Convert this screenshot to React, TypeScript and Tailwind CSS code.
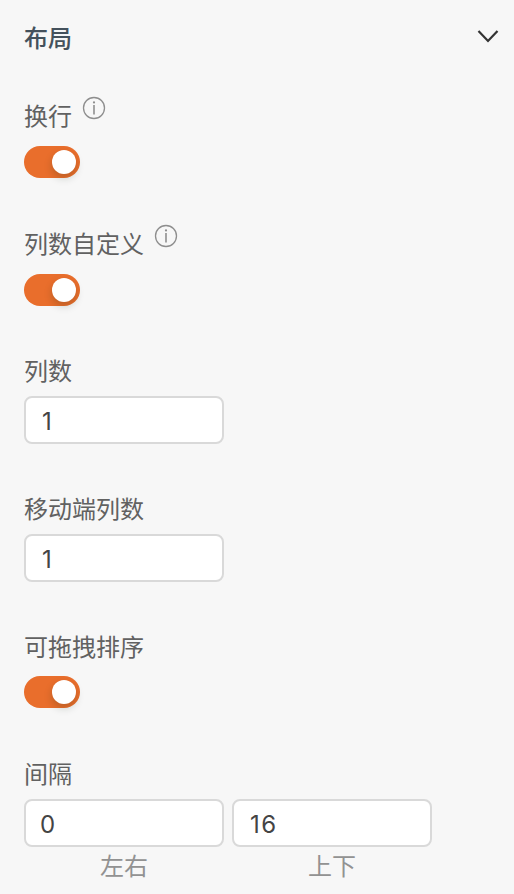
import React from "react";

const font = "font-['Inter','Noto_Sans_CJK_SC',sans-serif]";

function Info() {
  return (
    <svg width="24" height="24" viewBox="0 0 24 24" fill="none" stroke="#8e8e8e" strokeWidth="1.3" className="shrink-0">
      <circle cx="12" cy="12" r="10.5" />
      <path d="M12 9v9.5" strokeWidth="1.6" />
      <circle cx="12" cy="6.4" r="1.1" fill="#8e8e8e" stroke="none" />
    </svg>
  );
}

function Label({ text, info }: { text: string; info?: boolean }) {
  return (
    <div className="flex h-8 items-center text-[24px] leading-8 text-[#616161]">
      <span className={`whitespace-nowrap font-normal ${info ? "pt-[2px]" : "pt-px"}`}>{text}</span>
      {info && <span className="mb-4 ml-2.5"><Info /></span>}
    </div>
  );
}

function Toggle() {
  return (
    <div className="flex h-8 w-14 items-center justify-end rounded-full bg-[#e96e2c] pr-1">
      <div className="size-6 rounded-full bg-white shadow-[0_4px_8px_rgba(0,35,11,0.2)]" />
    </div>
  );
}

function Field({ value, inset }: { value: string; inset?: boolean }) {
  return (
    <div className={`flex h-12 w-[200px] items-center rounded-lg border-2 border-[#d9d9d9] bg-white pt-[3px] text-[24px] tracking-[1.5px] text-[#444] ${inset ? "pl-3.5" : "pl-4"}`}>
      {value}
    </div>
  );
}

export default function App() {
  return (
    <main className={`h-[894px] w-[514px] overflow-hidden bg-[#f7f7f7] pl-6 ${font}`}>
      <header className="flex h-[76px] items-center justify-between pr-[15px]">
        <h2 className="pt-[2px] text-[24px] font-medium leading-8 text-[#44515c]">布局</h2>
        <svg width="22" height="14" viewBox="0 0 22 14" fill="none" stroke="#333" strokeWidth="2.2" className="mb-1">
          <path d="M1.5 2l9.5 10L20.5 2" />
        </svg>
      </header>
      <section className="mt-6 h-[128px]"><Label text="换行" info /><div className="mt-3.5"><Toggle /></div></section>
      <section className="h-[127px]"><Label text="列数自定义" info /><div className="mt-3.5"><Toggle /></div></section>
      <section className="h-[138px]"><Label text="列数" /><div className="mt-[9px]"><Field value="1" /></div></section>
      <section className="h-[138px]"><Label text="移动端列数" /><div className="mt-[9px]"><Field value="1" /></div></section>
      <section className="h-[127px]"><Label text="可拖拽排序" /><div className="mt-[13px]"><Toggle /></div></section>
      <section>
        <Label text="间隔" />
        <div className="mt-[9px] flex gap-2">
          <div className="text-center"><Field value="0" inset /><p className="pt-0.5 text-[24px] leading-9 text-[#929292]">左右</p></div>
          <div className="text-center"><Field value="16" /><p className="pt-0.5 text-[24px] leading-9 text-[#929292]">上下</p></div>
        </div>
      </section>
    </main>
  );
}
